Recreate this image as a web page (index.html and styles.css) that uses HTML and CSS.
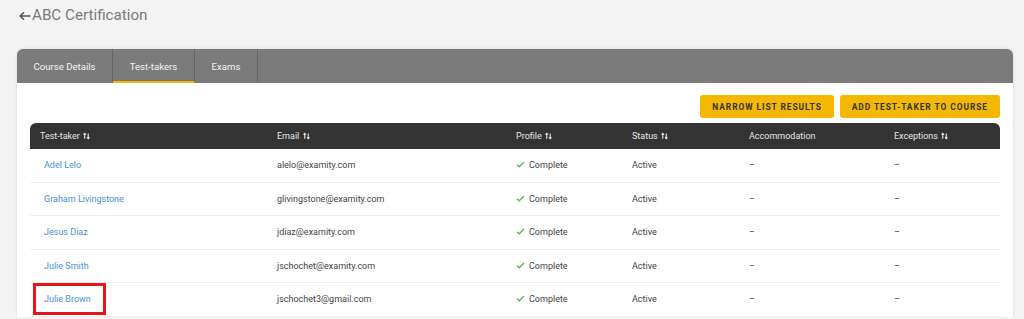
FILE: index.html
```html
<!DOCTYPE html>
<html lang="en">
<head>
    <meta charset="UTF-8">
    <title>ABC Certification</title>
    <link rel="stylesheet" href="styles.css">
</head>
<body>
    <div class="page-title">
        <svg class="back" viewBox="0 0 12 10"><path d="M11.5 5H1.2M5 1.2L1.2 5 5 8.8"/></svg>ABC Certification
    </div>

    <div class="card">
        <div class="tabs">
            <a class="tab">Course Details</a>
            <a class="tab active">Test-takers</a>
            <a class="tab">Exams</a>
        </div>
        <div class="card-body">
            <div class="actions">
                <button class="btn">Narrow List Results</button>
                <button class="btn">Add Test-taker to Course</button>
            </div>
            <table class="grid">
                <colgroup>
                    <col style="width:237px">
                    <col style="width:239px">
                    <col style="width:116px">
                    <col style="width:117px">
                    <col style="width:145px">
                    <col style="width:116px">
                </colgroup>
                <thead>
                    <tr>
                        <th>Test-taker <svg class="sort" viewBox="0 0 8 8"><path d="M2 7V1M0.6 2.4L2 1l1.4 1.4M6 1v6M4.6 5.6L6 7l1.4-1.4"/></svg></th>
                        <th>Email <svg class="sort" viewBox="0 0 8 8"><path d="M2 7V1M0.6 2.4L2 1l1.4 1.4M6 1v6M4.6 5.6L6 7l1.4-1.4"/></svg></th>
                        <th>Profile <svg class="sort" viewBox="0 0 8 8"><path d="M2 7V1M0.6 2.4L2 1l1.4 1.4M6 1v6M4.6 5.6L6 7l1.4-1.4"/></svg></th>
                        <th>Status <svg class="sort" viewBox="0 0 8 8"><path d="M2 7V1M0.6 2.4L2 1l1.4 1.4M6 1v6M4.6 5.6L6 7l1.4-1.4"/></svg></th>
                        <th>Accommodation</th>
                        <th>Exceptions <svg class="sort" viewBox="0 0 8 8"><path d="M2 7V1M0.6 2.4L2 1l1.4 1.4M6 1v6M4.6 5.6L6 7l1.4-1.4"/></svg></th>
                    </tr>
                </thead>
                <tbody>
                    <tr>
                        <td class="name"><a href="#">Adel Lelo</a></td>
                        <td>alelo@examity.com</td>
                        <td><svg class="check" viewBox="0 0 10 8"><path d="M1 4.2l2.6 2.4L9 1.2"/></svg>Complete</td>
                        <td>Active</td>
                        <td>&ndash;</td>
                        <td>&ndash;</td>
                    </tr>
                    <tr>
                        <td class="name"><a href="#">Graham Livingstone</a></td>
                        <td>glivingstone@examity.com</td>
                        <td><svg class="check" viewBox="0 0 10 8"><path d="M1 4.2l2.6 2.4L9 1.2"/></svg>Complete</td>
                        <td>Active</td>
                        <td>&ndash;</td>
                        <td>&ndash;</td>
                    </tr>
                    <tr>
                        <td class="name"><a href="#">Jesus Diaz</a></td>
                        <td>jdiaz@examity.com</td>
                        <td><svg class="check" viewBox="0 0 10 8"><path d="M1 4.2l2.6 2.4L9 1.2"/></svg>Complete</td>
                        <td>Active</td>
                        <td>&ndash;</td>
                        <td>&ndash;</td>
                    </tr>
                    <tr>
                        <td class="name"><a href="#">Julie Smith</a></td>
                        <td>jschochet@examity.com</td>
                        <td><svg class="check" viewBox="0 0 10 8"><path d="M1 4.2l2.6 2.4L9 1.2"/></svg>Complete</td>
                        <td>Active</td>
                        <td>&ndash;</td>
                        <td>&ndash;</td>
                    </tr>
                    <tr>
                        <td class="name"><a href="#">Julie Brown</a><span class="highlight"></span></td>
                        <td>jschochet3@gmail.com</td>
                        <td><svg class="check" viewBox="0 0 10 8"><path d="M1 4.2l2.6 2.4L9 1.2"/></svg>Complete</td>
                        <td>Active</td>
                        <td>&ndash;</td>
                        <td>&ndash;</td>
                    </tr>
                </tbody>
            </table>
        </div>
    </div>
</body>
</html>
```

FILE: styles.css
```css
* {
    margin: 0;
    padding: 0;
    box-sizing: border-box;
}
body {
    background: #f3f3f3;
    font-family: Roboto, "Liberation Sans", sans-serif;
    color: #444;
    overflow: hidden;
}
.page-title {
    height: 49px;
    padding: 4px 0 0 19px;
    font-size: 15.2px;
    color: #7a7a7a;
    line-height: 22px;
}
.page-title .back {
    width: 12px;
    height: 10px;
    margin-right: 1px;
    vertical-align: -1px;
    fill: none;
    stroke: #555;
    stroke-width: 1.6;
}

/* Card with tab strip */
.card {
    margin: 0 11px 0 17px;
    background: white;
    border-radius: 6px 6px 0 0;
    box-shadow: 0 0 3px rgba(0, 0, 0, 0.12);
}
.tabs {
    display: flex;
    height: 34px;
    background: #7b7b7b;
    border-radius: 6px 6px 0 0;
}
.tab {
    display: flex;
    align-items: center;
    justify-content: center;
    font-size: 9.6px;
    color: #f2f2f2;
    border-right: 1px solid #666;
    border-bottom: 2px solid transparent;
    padding-top: 2px;
}
.tab:nth-child(1) { width: 96px; }
.tab:nth-child(2) { width: 82px; }
.tab:nth-child(3) { width: 63px; }
.tab.active {
    border-bottom-color: #f5b400;
}
.card-body {
    padding: 12px 13px 0;
}

/* Buttons */
.actions {
    display: flex;
    justify-content: flex-end;
    gap: 6px;
}
.btn {
    height: 23px;
    padding: 0 12px;
    border: none;
    border-radius: 3px;
    background: #f5b800;
    color: #333;
    font-family: Roboto, "Liberation Sans", sans-serif;
    font-size: 8.4px;
    font-weight: 700;
    letter-spacing: 0.95px;
    text-transform: uppercase;
    white-space: nowrap;
}

/* Table */
.grid {
    width: 100%;
    margin-top: 5px;
    border-collapse: separate;
    border-spacing: 0;
    table-layout: fixed;
    font-size: 9px;
}
.grid th {
    height: 26px;
    background: #333;
    color: #e6e6e6;
    font-weight: 400;
    text-align: left;
    padding-left: 10px;
    white-space: nowrap;
}
.grid th:first-child { border-top-left-radius: 6px; }
.grid th:last-child { border-top-right-radius: 6px; }
.sort {
    width: 7px;
    height: 8px;
    margin-left: 1px;
    vertical-align: -1px;
    fill: none;
    stroke: #e6e6e6;
    stroke-width: 1.3;
}
.grid td {
    height: 33.5px;
    padding-left: 10px;
    border-bottom: 1px solid #efefef;
    color: #444;
    white-space: nowrap;
}
.grid td.name {
    padding-left: 14px;
    position: relative;
}
.grid td a {
    color: #4a8fd8;
    text-decoration: none;
}
.check {
    width: 9px;
    height: 7px;
    margin-right: 4px;
    fill: none;
    stroke: #5cb85c;
    stroke-width: 1.6;
}
.highlight {
    position: absolute;
    left: 3px;
    top: 0;
    width: 73px;
    height: 32px;
    border: 3px solid #e8141c;
}
```
